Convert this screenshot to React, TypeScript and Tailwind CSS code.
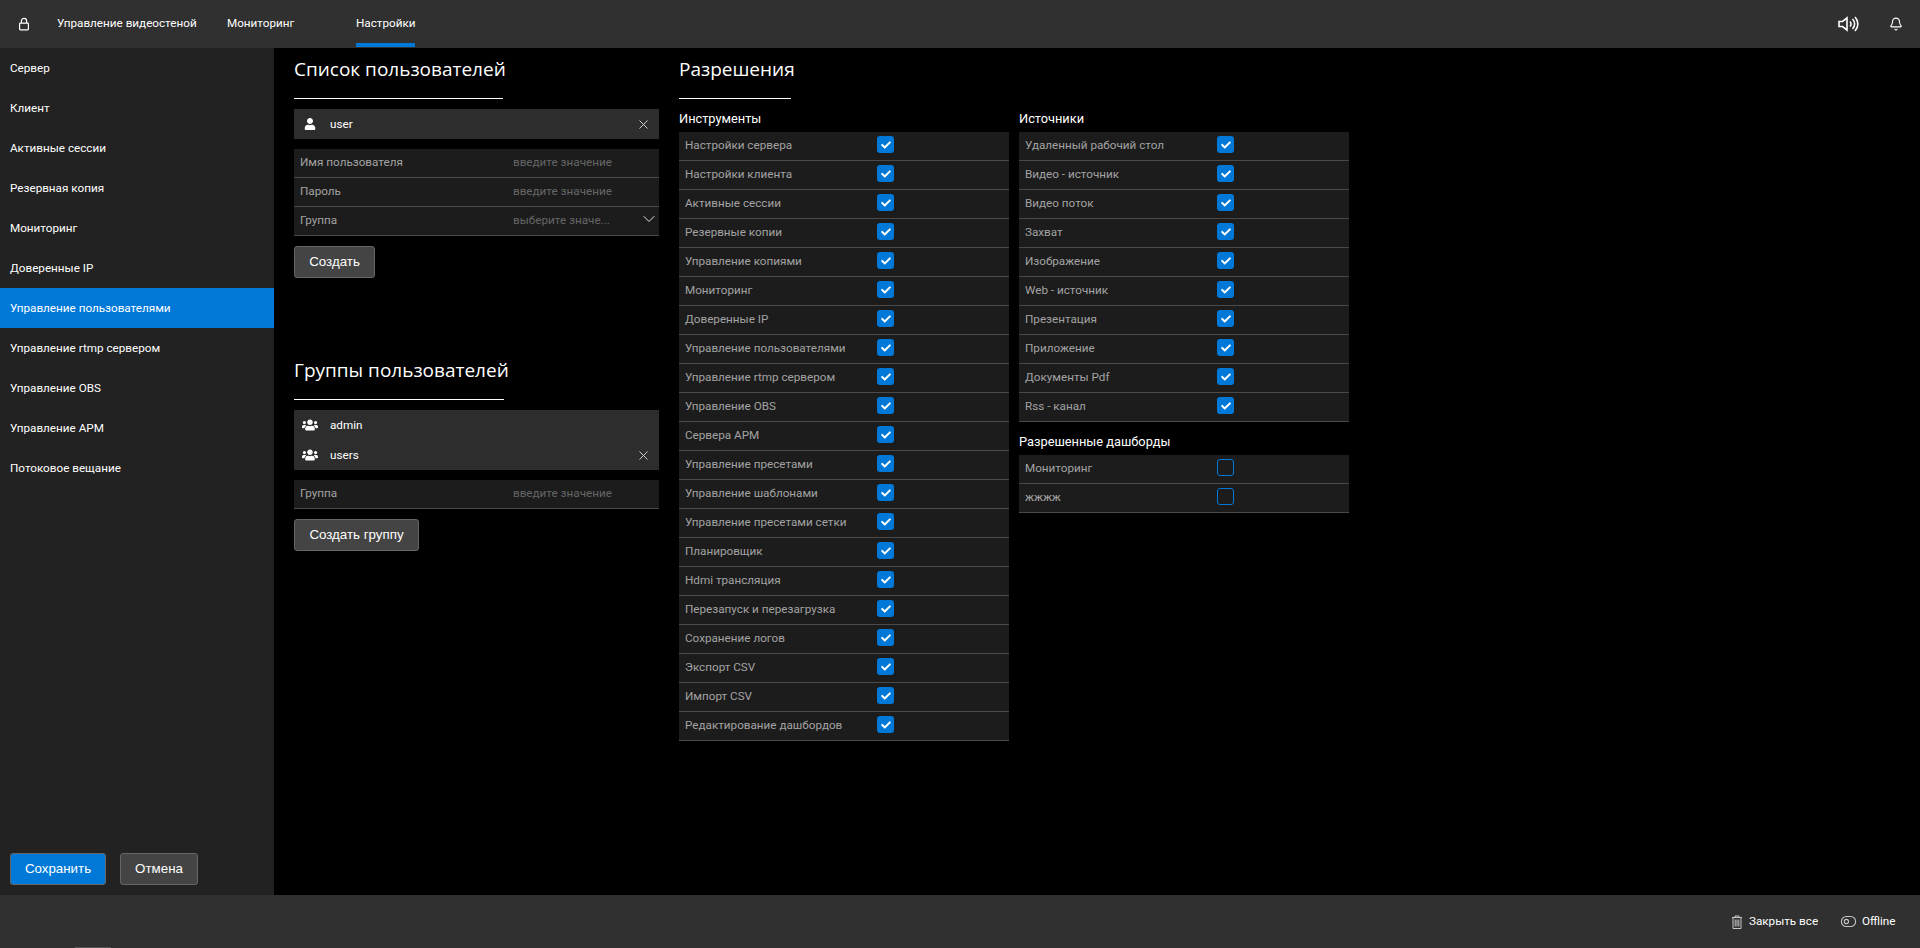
import { Bell, ChevronDown, ToggleLeft, X } from "lucide-react";
import { FaCheck, FaUser, FaUsers } from "react-icons/fa";

const navItems = [
  "Сервер",
  "Клиент",
  "Активные сессии",
  "Резервная копия",
  "Мониторинг",
  "Доверенные IP",
  "Управление пользователями",
  "Управление rtmp сервером",
  "Управление OBS",
  "Управление АРМ",
  "Потоковое вещание",
];

const tools = [
  "Настройки сервера",
  "Настройки клиента",
  "Активные сессии",
  "Резервные копии",
  "Управление копиями",
  "Мониторинг",
  "Доверенные IP",
  "Управление пользователями",
  "Управление rtmp сервером",
  "Управление OBS",
  "Сервера АРМ",
  "Управление пресетами",
  "Управление шаблонами",
  "Управление пресетами сетки",
  "Планировщик",
  "Hdmi трансляция",
  "Перезапуск и перезагрузка",
  "Сохранение логов",
  "Экспорт CSV",
  "Импорт CSV",
  "Редактирование дашбордов",
];

const sources = [
  "Удаленный рабочий стол",
  "Видео - источник",
  "Видео поток",
  "Захват",
  "Изображение",
  "Web - источник",
  "Презентация",
  "Приложение",
  "Документы Pdf",
  "Rss - канал",
];

const Heading = ({ title, lineWidth }: { title: string; lineWidth: string }) => (
  <div className={`h-[50px] border-b border-white ${lineWidth}`}>
    <h2 className="whitespace-nowrap font-['Open_Sans',sans-serif] text-[19px] leading-[41px] text-white">{title}</h2>
  </div>
);

const FormRow = ({ label, hint, select }: { label: string; hint: string; select?: boolean }) => (
  <div className="relative flex h-[29px] items-center border-b border-[#4a4a4a] bg-[#1c1c1c] pb-[1px] pl-[6px] text-[11.7px]">
    <span className="w-[213px] text-[#a3a3a3]">{label}</span>
    <span className="text-[#666666]">{hint}</span>
    {select && <ChevronDown className="absolute right-0 top-[2px] h-[20px] w-[20px] text-[#e0e0e0]" strokeWidth={1.2} />}
  </div>
);

const ListRow = ({ name, group, remove }: { name: string; group?: boolean; remove?: boolean }) => (
  <div className="flex h-[30px] items-center bg-[#2d2d2d] text-[11.7px] text-white">
    <span className="flex w-[32px] justify-center">
      {group ? <FaUsers className="h-[16px] w-[16px]" /> : <FaUser className="h-[12px] w-[12px]" />}
    </span>
    <span className="ml-[4px] flex-1 pt-[1px]">{name}</span>
    {remove && <X className="mr-[8px] h-[15px] w-[15px] text-[#d8d8d8]" strokeWidth={1.5} />}
  </div>
);

const CheckRow = ({ label, checked }: { label: string; checked: boolean }) => (
  <div className="flex h-[29px] items-start border-b border-[#4a4a4a] bg-[#1c1c1c] pl-[6px] text-[11.7px]">
    <span className="w-[192px] whitespace-nowrap leading-[27px] text-[#a3a3a3]">{label}</span>
    {checked ? (
      <span className="mt-[4px] flex h-[17px] w-[17px] items-center justify-center rounded-[3px] bg-[#0078d7] text-white">
        <FaCheck className="h-[10px] w-[10px]" />
      </span>
    ) : (
      <span className="mt-[4px] h-[17px] w-[17px] rounded-[3px] border border-[#0078d7]" />
    )}
  </div>
);

const Button = ({ label, width, primary }: { label: string; width: string; primary?: boolean }) => (
  <button
    className={`h-[32px] rounded-[3px] border border-[#666666] font-['Liberation_Sans',sans-serif] text-[13.33px] text-white ${width} ${
      primary ? "bg-[#0078d7]" : "bg-[#444444]"
    }`}
  >
    {label}
  </button>
);

const App = () => {
  return (
    <div className="flex h-screen w-full flex-col overflow-hidden bg-black font-['Roboto',sans-serif]">
      {/* HEADER */}
      <header className="flex h-[48px] shrink-0 items-center bg-[#303030] text-[11.7px] text-white">
        <svg className="ml-[17px] h-[14px] w-[14px]" viewBox="0 0 14 14" fill="none" stroke="currentColor" strokeWidth="1.2">
          <rect x="2.6" y="6.1" width="8.8" height="6.8" rx="0.8" />
          <path d="M4.4 6V3.9a2.6 2.6 0 0 1 5.2 0V6" />
        </svg>
        <span className="ml-[26px] w-[140px] whitespace-nowrap">Управление видеостеной</span>
        <span className="ml-[30px] w-[69px] whitespace-nowrap">Мониторинг</span>
        <div className="relative ml-[60px] flex h-full w-[59px] items-center">
          <span className="whitespace-nowrap">Настройки</span>
          <span className="absolute bottom-px left-0 h-[4px] w-full bg-[#0078d7]" />
        </div>
        <svg className="ml-auto h-[20px] w-[21px]" viewBox="0 0 21 20" fill="none" stroke="currentColor" strokeWidth="1.6">
          <path d="M1 7.5h3.5L9 4v12l-4.5-3.5H1z" />
          <path d="M12 7.5a3.5 3.5 0 0 1 0 5" />
          <path d="M14.5 5a7 7 0 0 1 0 10" />
          <path d="M17 3a10 10 0 0 1 0 14" />
        </svg>
        <Bell className="ml-[30px] mr-[17px] h-[14px] w-[14px] text-white" strokeWidth={1.9} />
      </header>

      <div className="flex min-h-0 flex-1">
        {/* SIDEBAR */}
        <aside className="flex w-[274px] shrink-0 flex-col justify-between bg-[#222222] pb-[10px]">
          <nav>
            {navItems.map((item) => (
              <div
                key={item}
                className={`flex h-[40px] items-center pl-[10px] pt-[2px] text-[11.7px] text-white ${
                  item === "Управление пользователями" ? "bg-[#0078d7]" : ""
                }`}
              >
                {item}
              </div>
            ))}
          </nav>
          <div className="flex gap-[14px] pl-[10px]">
            <Button label="Сохранить" width="w-[96px]" primary />
            <Button label="Отмена" width="w-[78px]" />
          </div>
        </aside>

        {/* CONTENT */}
        <main className="flex items-start pl-[20px] pt-px">
          <div className="w-[365px]">
            <Heading title="Список пользователей" lineWidth="w-[209px]" />
            <div className="mt-[10px]">
              <ListRow name="user" remove />
            </div>
            <div className="mt-[10px]">
              <FormRow label="Имя пользователя" hint="введите значение" />
              <FormRow label="Пароль" hint="введите значение" />
              <FormRow label="Группа" hint="выберите значе..." select />
            </div>
            <div className="mt-[10px]">
              <Button label="Создать" width="w-[81px]" />
            </div>

            <div className="mt-[72px]">
              <Heading title="Группы пользователей" lineWidth="w-[210px]" />
            </div>
            <div className="mt-[10px]">
              <ListRow name="admin" group />
              <ListRow name="users" group remove />
            </div>
            <div className="mt-[10px]">
              <FormRow label="Группа" hint="введите значение" />
            </div>
            <div className="mt-[10px]">
              <Button label="Создать группу" width="w-[125px]" />
            </div>
          </div>

          <div className="ml-[20px]">
            <Heading title="Разрешения" lineWidth="w-[112px]" />
            <div className="flex gap-[10px]">
              <div className="w-[330px]">
                <h3 className="mb-[3px] mt-[10px] h-[20px] text-[12.8px] leading-[19px] text-white">Инструменты</h3>
                {tools.map((t) => (
                  <CheckRow key={t} label={t} checked />
                ))}
              </div>
              <div className="w-[330px]">
                <h3 className="mb-[3px] mt-[10px] h-[20px] text-[12.8px] leading-[19px] text-white">Источники</h3>
                {sources.map((s) => (
                  <CheckRow key={s} label={s} checked />
                ))}
                <h3 className="mb-[3px] mt-[10px] h-[20px] text-[12.8px] leading-[19px] text-white">Разрешенные дашборды</h3>
                <CheckRow label="Мониторинг" checked={false} />
                <CheckRow label="жжжж" checked={false} />
              </div>
            </div>
          </div>
        </main>
      </div>

      {/* FOOTER */}
      <footer className="relative flex h-[53px] shrink-0 items-center justify-end bg-[#303030] pr-[20px] text-[11.7px] text-white">
        <svg className="h-[14px] w-[12px] text-[#c8c8c8]" viewBox="0 0 12 14" fill="none" stroke="currentColor" strokeWidth="1">
          <path d="M1 2.5h10M4 2.5V1h4v1.5M2 2.5v11h8v-11" />
          <path d="M4.2 4.5v7M6 4.5v7M7.8 4.5v7" />
        </svg>
        <span className="ml-[6px] w-[72px] whitespace-nowrap">Закрыть все</span>
        <ToggleLeft className="ml-[19px] h-[17px] w-[17px] text-[#c8c8c8]" strokeWidth={1.5} />
        <span className="ml-[5px] w-[38px] whitespace-nowrap">Offline</span>
        <span className="absolute bottom-0 left-[75px] h-px w-[36px] bg-[#555555]" />
      </footer>
    </div>
  );
};

export default App;
